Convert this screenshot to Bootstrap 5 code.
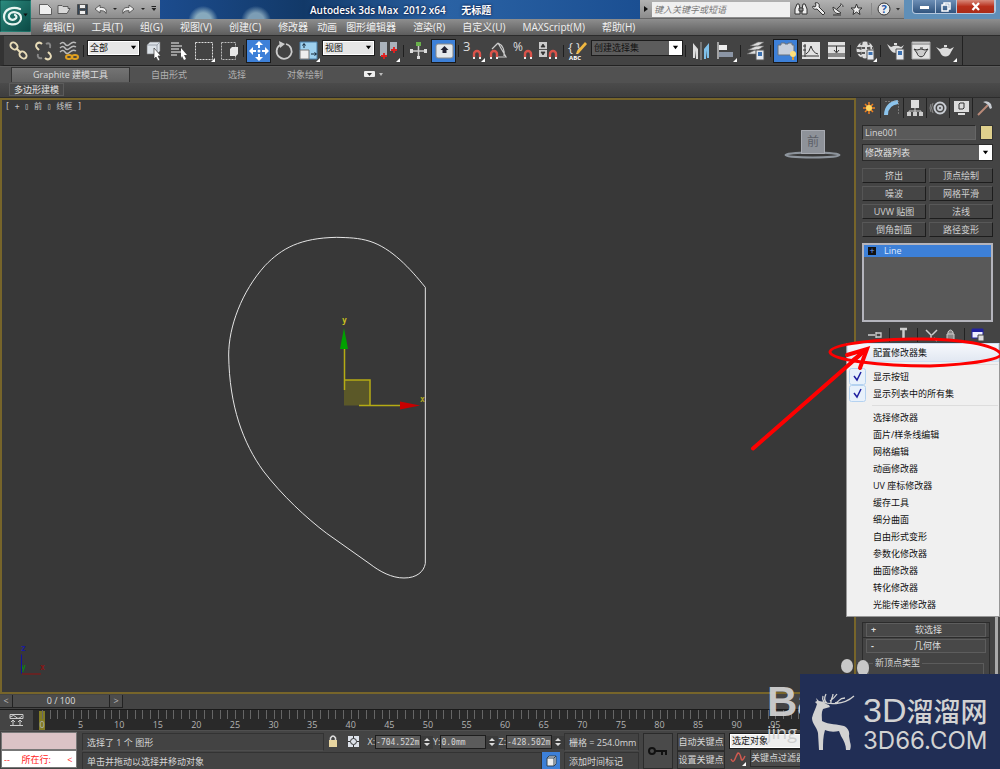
<!DOCTYPE html>
<html lang="zh-CN">
<head>
<meta charset="utf-8">
<meta name="viewport" content="width=device-width, initial-scale=1">
<title>Autodesk 3ds Max 2012 x64 无标题</title>
<link rel="stylesheet" href="https://cdn.jsdelivr.net/npm/bootstrap@5.3.0/dist/css/bootstrap.min.css">
<style>
:root{--face:#444;--ink:#d6d6d6;--olive:#77652a;--blue:#3d80d8}
body{font:9px/12px "Open Sans","Noto Sans CJK SC",sans-serif;color:var(--ink);background:var(--face);overflow:hidden}
svg{display:block;flex:none}
.btn{--bs-btn-padding-x:0;--bs-btn-padding-y:0;--bs-btn-border-radius:0;--bs-btn-border-width:0;font:inherit;color:inherit;line-height:12px}
.form-control,.form-select{font:inherit;color:inherit;border-radius:0;min-height:0;padding:0 2px;line-height:12px;border:1px solid #222}
.form-select{background:#e6e6e6 url("data:image/svg+xml,%3Csvg xmlns='http://www.w3.org/2000/svg' viewBox='0 0 8 8'%3E%3Cpath d='M1 2h6L4 6z'/%3E%3C/svg%3E") no-repeat right 2px center/7px;color:#111;border:1px solid #1c1c1c;box-shadow:inset 0 0 0 1px #fff}
.form-select.dark{color:#e0e0e0;background:url("data:image/svg+xml,%3Csvg xmlns='http://www.w3.org/2000/svg' viewBox='0 0 8 8'%3E%3Cpath d='M1 2h6L4 6z'/%3E%3C/svg%3E") no-repeat right 3px center/7px,linear-gradient(#fff,#fff) no-repeat right/13px 100%,#5c5c5c;box-shadow:none}
/* header */
.logo-btn{width:31px;height:32px;background:linear-gradient(135deg,#2b8a7e,#0b4a45);border:1px solid #123;display:grid;place-items:center}
.titlerow{height:19px;background:#1d4a8a}
.greybar{background:linear-gradient(#b2b2b2,#8c8c8c);border-bottom:1px solid #666}
.caption{background:radial-gradient(circle at 9% 110%,#87a9bd 0 8px,transparent 15px),radial-gradient(circle at 20% 110%,#7c9db5 0 8px,transparent 15px),radial-gradient(ellipse at 59% 110%,#a9c4da 0 8px,transparent 22px),radial-gradient(ellipse at 84% 120%,#6b93bd 0 4px,transparent 20px),linear-gradient(90deg,#1c4c8e,#123968 30%,#2a62a4 60%,#1b4f92);color:#fff;font-weight:600;font-size:10px;text-shadow:0 0 3px #002;overflow:hidden}
.caption-text{padding-left:150px}
.search-box{width:138px;height:15px;background:#f0f0f0;color:#666;font-style:italic;border:0}
.search-box::placeholder{color:#777;opacity:1}
.menurow{height:16px;background:linear-gradient(#8e8e8e,#5d5d5d);padding-left:12px;gap:17px;font-size:10px}
.menurow a{color:#f0f0f0;text-decoration:none}
.tight{gap:9px}
.win{height:14px;border:1px solid #b4c7dd;border-top:0;background:linear-gradient(#6d8fb6,#31547e);overflow:hidden;border-radius:0 0 4px 4px}
.win .btn{height:13px;display:grid;place-items:center;border-right:1px solid #b4c7dd}
.win .w1{width:23px}.win .w2{width:21px}.win .w3{width:38px;background:linear-gradient(#d88a7b,#b8301c 50%,#a92c18)}
.win-wrap{background:#5f8fb8}
/* toolbar */
.tools{height:31px;background:#434343;border-top:1px solid #2c2c2c;border-bottom:1px solid #222;border-left:4px solid #333;padding-left:2px}
.toolset{border-right:1px solid #222}
.tools svg{overflow:visible}
.tools .btn{width:25px;height:24px;display:grid;place-items:center}
.tools .btn.active{background:var(--blue);box-shadow:inset 0 0 0 1px #1a1a1a;color:#fff}
.vsep{width:5px;height:12px;background:linear-gradient(#1f1f1f,#1f1f1f) center/1px 100% no-repeat}
.combo-s{width:53px;height:16px;margin:0 1px 6px}
.combo-l{width:92px;height:16px;margin-bottom:6px}
.tools .combo-l{color:#111}
/* ribbon */
.ribbon-tabs{height:17px;background:#515151;border-top:1px solid #5c5c5c;padding-left:11px}
.ribbon-tabs .btn{height:15px;color:#b0b0b0}
.ribbon-tabs .btn.active{width:119px;margin-right:21px;background:linear-gradient(#747474,#626262);color:#ddd;border:1px solid #333;border-bottom:0}
.ribbon-rest{gap:41px}
.ribbon-panel{height:15px;background:linear-gradient(#4b4b4b,#3e3e3e);border-bottom:1px solid #2c2c2c;padding-left:9px}
.ribbon-panel .btn{background:#484848;border:1px solid #5b5b5b;padding:0 4px;height:13px;line-height:11px;color:#e4e4e4}
/* work area */
.viewport-pane{background:#383838;border:2px solid var(--olive)}
.viewport-pane svg{position:absolute;inset:0;width:100%;height:100%}
.vp-label{padding:1px 3px;color:#c8c8c8;font-family:"DejaVu Sans Mono","Noto Sans CJK SC",monospace;font-size:8px;white-space:pre}
.cmd{width:144px;background:var(--face);padding:0 7px 0 6px}
.cmd-tabs{height:21px;margin:0 -6px 6px -4px}
.cmd-tabs .btn{width:23px;height:20px;display:grid;place-items:center;border-right:1px solid #222}
.name-in{height:15px;background:#5a5a5a;border:1px solid #2a2a2a;border-right-color:#666;border-bottom-color:#666}
.swatch{width:13px;height:15px;background:#dfd08d;border:1px solid #333}
.mod-list{height:17px;border-color:#2a2a2a}
.modset{display:grid;grid-template-columns:1fr 1fr;gap:3px;margin:7px 0 6px}
.modset .btn{height:15px;background:#454545;border-top:1px solid #585858;border-left:1px solid #555;border-right:1px solid #1d1d1d;border-bottom:1px solid #1d1d1d;color:#cfcfcf}
.stack{height:79px;background:#595959;border:2px solid #b4b4bc}
.stack-row{height:12px;background:var(--blue);color:#dfe9ff}
.pl{width:8px;height:8px;background:#111;color:#6fa2ff;line-height:7px;text-align:center}
.rollout{height:14px;border:1px solid #5d5d5d;background:#484848;line-height:12px;color:#ddd}
.rollwrap{border:1px solid #2c2c2c;padding:1px 3px;margin-right:3px}
.group-box{border:1px solid #5c5c5c;border-bottom:0;height:29px;margin:8px 2px 0;padding:0}
.group-box legend{float:none;width:auto;font-size:9px;line-height:12px;margin:0 0 0 4px;padding:0 2px}
.scroll-strip{right:2px;top:519px;bottom:0;width:3px;background:#aaa}
/* popup list */
.popmenu{right:0;top:245px;width:154px;height:274px;background:#f0f0f0;border:1px solid #979797;padding:0 1px 2px;color:#111}
.popmenu .btn{text-align:left;padding-left:25px;position:relative;color:#111}
.popmenu .btn:first-child{background:linear-gradient(#f6f8fc,#e2e8f2);box-shadow:0 0 0 1px #cfe0f4}
.popmenu hr{margin:3px 0 3px 24px;opacity:1;border-top:1px solid #ddd}
.popmenu .tick svg{position:absolute;left:1px;top:0;width:17px;height:17px}
.markup{right:0;top:235px}
/* time controls */
.slider-row{height:15px;background:var(--face);padding-top:1px}
.slider-row .btn{height:13px;width:13px;background:#4c4c4c;border-right:1px solid #222;border-bottom:1px solid #222;line-height:12px;color:#bbb}
.slider-row .thumb{width:97px;color:#ddd}
.trackbar{height:21px;background:#292929;border-top:1px solid #1a1a1a}
.curve-toggle{width:33px;height:20px;background:#444;display:grid;place-items:center}
.ticks{margin:0 186px 0 9px}
.cell5{flex:1 1 0;min-width:0;position:relative}
.cell5 i{flex:1 1 0;height:9px;border-left:1px solid #666}
.cell5 b{position:absolute;left:-10px;top:9px;width:20px;text-align:center;font-weight:400;line-height:11px;color:#b4b4b4}
.now{left:-3px;top:1px;width:6px;height:19px;background:#918923;opacity:.85}
/* status */
.status{height:39px;background:var(--face);border-top:1px solid #505050}
.listener{width:78px;padding:1px}
.listener .form-control{height:18px;background:#dbc3c6;border-color:#777}
.listener .form-control+.form-control{background:#fff;color:#f22}
.prompts{padding:2px 4px 0 4px;gap:1px}
.cellbox{height:18px;border:1px solid #333;border-bottom-color:#4e4e4e;padding:2px 4px;background:#434343;line-height:13px;white-space:nowrap;overflow:hidden}
.cell-end{width:75px}
.coord{width:46px;height:14px;background:#5b5b5b;border-color:#1e1e1e;font-family:"DejaVu Sans Mono",monospace;font-size:8px;padding:0}
.spin{width:12px;height:13px;display:grid;place-items:center;background:#3b3b3b}
.degrade{background:var(--blue);width:18px}
.keys{width:357px;padding-top:2px}
.keys .btn{background:#4a4a4a;border:1px solid #2b2b2b;height:18px;white-space:nowrap}
.keys .bigkey{width:30px;height:36px;display:grid;place-items:center}
.keys .kb{width:48px}
.keys .form-select{height:16px;background-color:#eee}
/* watermarks */
.brand-card{right:0;bottom:0;width:200px;height:95px;background:#212e55;color:#d2d2d2;z-index:9}
.brand-words{position:absolute;left:63px;top:18px;white-space:nowrap}
.brand-top{height:37px;line-height:36px;font-size:27px;font-family:"Noto Sans CJK SC",sans-serif;font-weight:500}
.brand-top span{font:34px/36px "Liberation Sans",sans-serif}
.brand-sub{font:24px/24px Inter,sans-serif}
.wm{right:0;bottom:0;width:233px;height:112px;color:#cfcfcf;z-index:8}
.wm-a{font:bold 42px/42px "Liberation Sans",sans-serif;opacity:.95}
.wm-b{font:18px/18px "Open Sans",sans-serif}
.paws{left:74px;top:2px}
</style>
</head>
<body class="d-flex flex-column min-vh-100 position-relative">
<header class="d-flex greybar border-0">
  <button class="btn logo-btn" aria-label="应用程序菜单"><svg width="29" height="30" viewBox="0 0 29 30" fill="none" stroke="#e8f4f0" stroke-width="2.2" stroke-linecap="round"><path d="M19 8C12 5 3 8 3 16c0 9 15 10 17 2 1-7-10-9-12-4-1 4 3 6 6 4 2-1 2-3 0-4"/><path d="M22.500 12.500h4l-2 3z" fill="#111" stroke="none"/></svg></button>
  <div class="flex-grow-1">
    <div class="titlerow d-flex">
      <div class="greybar d-flex align-items-center px-1">
        <svg width="121" height="18" viewBox="35 0 121 18"><g fill="#eee" stroke="#444" stroke-width=".8"><path d="M39.500 4.500h8l4 4v6h-12z"/><path d="M58 13.500v-8h4l1 1h5v2h2l-3 5z" fill="#d8d8d8"/><path d="M77.500 4.500h10v10h-10z" fill="#345"/><path d="M79.500 4.500h6v4h-6zM79.500 10.500h6v4h-6z"/><path d="M95 9l5-4v2.500c5-.5 7 2 6 6-1-2.500-3-3-6-2.800V13z"/><path d="M134 9l-5-4v2.500c-5-.5-7 2-6 6 1-2.500 3-3 6-2.800V13z"/></g><path d="M113 8h4l-2 2zM141 8h4l-2 2zM151.500 6h5v1h-5zM151.500 8h5l-2.500 3z" fill="#222"/></svg>
      </div>
      <div class="caption flex-grow-1 d-flex align-items-center"><span class="caption-text text-nowrap">Autodesk 3ds Max&nbsp; 2012 x64 &nbsp; &nbsp; &nbsp;无标题</span></div>
      <div class="greybar d-flex align-items-center">
        <svg width="12" height="18" viewBox="0 0 12 18"><path d="M4 6v6l4-3z" fill="#111"/></svg>
        <input class="form-control search-box" aria-label="搜索" placeholder="键入关键字或短语">
        <svg width="114" height="18" viewBox="791 0 114 18"><g fill="#eee" stroke="#333" stroke-width="1"><path d="M796 14V9l2-5h2l1 5v5zM803 14V9l1-5h2l2 5v5zM800 8h4v3h-4z"/><path d="M816 3c3-1 5 1 4 4l6 6-2 2-6-6c-3 1-5-1-4-3l2 1 1-2z"/><path d="M834 7l8 6c-4 2-8-1-8-6zM838 9l4-4M841 4c2 0 3 1 3 3M834 15h8" /><path d="M857.500 4l1.500 4h4l-3 2.500 1 4-3.500-2.500-3.500 2.500 1-4-3-2.500h4z"/><circle cx="885" cy="9" r="6"/></g><path d="M872.500 3v12" stroke="#888"/><text x="885" y="13" font-size="11" font-weight="700" text-anchor="middle" fill="#2759a8">?</text><path d="M897 8h4l-2 2.500z" fill="#333"/></svg>
      </div>
      <div class="win-wrap px-1 ps-2">
        <div class="win d-flex">
          <button class="btn w1" aria-label="最小化"><svg width="11" height="9"><path d="M1 4h9v3H1z" fill="#fff"/></svg></button>
          <button class="btn w2" aria-label="还原"><svg width="10" height="10" fill="none" stroke="#fff" stroke-width="1.500"><path d="M3 3V1h6v6H7M1 3h6v6H1z"/></svg></button>
          <button class="btn w3" aria-label="关闭"><svg width="10" height="9" stroke="#fff" stroke-width="2.200"><path d="M1.500 1l6.500 7M8 1L1.500 8"/></svg></button>
        </div>
      </div>
    </div>
    <nav class="menurow d-flex align-items-center text-nowrap">
      <a href="#">编辑(E)</a><a href="#">工具(T)</a><a href="#">组(G)</a><a href="#">视图(V)</a><a href="#">创建(C)</a>
      <span class="d-flex tight"><a href="#">修改器</a><a href="#">动画</a><a href="#">图形编辑器</a></span>
      <a href="#">渲染(R)</a><a href="#">自定义(U)</a><a href="#">MAXScript(M)</a><a href="#">帮助(H)</a>
    </nav>
  </div>
</header>

<div class="tools d-flex">
 <div class="toolset d-flex align-items-center pe-1">
  <button class="btn" aria-label="链接"><svg width="22" height="22" fill="none" stroke="#e8dcb8" stroke-width="2"><ellipse cx="6" cy="6" rx="4" ry="3" transform="rotate(45 6 6)"/><ellipse cx="15" cy="15" rx="4" ry="3" transform="rotate(45 15 15)"/><path d="M8 8l5 5"/></svg></button>
  <button class="btn" aria-label="取消链接"><svg width="22" height="22" fill="none" stroke="#e8dcb8" stroke-width="2"><path d="M9 4C6 1 1 4 4 8l2 2M12 18c3 3 8 0 5-4l-2-2"/><path d="M13 4c3-2 5 0 4 4M5 14c-1 3 1 5 4 4" stroke="#888"/></svg></button>
  <button class="btn" aria-label="绑定"><svg width="22" height="22" fill="none" stroke="#bbb" stroke-width="1.500"><path d="M2 4q3-3 5 0t5 0 6-1M2 8q3-3 5 0t5 0 6-1M2 12q3-3 5 0t5 0 6-1"/><g stroke="#e0a020" stroke-width="2"><ellipse cx="11" cy="17" rx="3" ry="2"/><ellipse cx="17" cy="17" rx="3" ry="2"/></g></svg></button>
  <span class="vsep"></span>
  <select class="form-select combo-s" aria-label="选择过滤器"><option>全部</option></select>
  <button class="btn" aria-label="选择对象"><svg width="22" height="22"><path d="M4 5l3-3h10v9l-3 3H4z" fill="#dce2e8" stroke="#777" stroke-width=".6"/><path d="M4 5h10v9M14 5l3-3" fill="none" stroke="#8a939c" stroke-width=".8"/><path d="M11 8l7 8h-3l2 4-2 1-2-4-2 2z" fill="#fff" stroke="#333" stroke-width=".7"/></svg></button>
  <button class="btn" aria-label="按名称选择"><svg width="22" height="22"><path d="M3 3h8M3 6h11M3 9h8M3 12h10M3 15h6" stroke="#bbb" stroke-width="1.300"/><path d="M13 8l6 7h-3l2 4-2 1-2-4-1 2z" fill="#fff"/></svg></button>
  <button class="btn" aria-label="矩形选择区域"><svg width="22" height="22"><path d="M2.500 2.500h17v17h-17z" fill="none" stroke="#ddd" stroke-dasharray="2 1"/><path d="M22 18v4h-4z" fill="#fff"/></svg></button>
  <button class="btn" aria-label="窗口/交叉"><svg width="22" height="22"><path d="M3.500 2.500h14v17h-14z" fill="none" stroke="#bbb" stroke-dasharray="2 1"/><path d="M12 9l2-2h6v7l-2 2h-6z" fill="#e8e8e8"/></svg></button>
  <span class="vsep"></span>
  <button class="btn active" aria-label="选择并移动"><svg width="22" height="22" fill="#fff"><path d="M11 1l4 4h-3v3h-2V5H7zM11 21l4-4h-3v-3h-2v3H7zM1 11l4-4v3h3v2H5v3zM21 11l-4-4v3h-3v2h3v3z"/><circle cx="11" cy="11" r="1.500"/></svg></button>
  <button class="btn" aria-label="选择并旋转"><svg width="22" height="22" fill="none" stroke="#ccc" stroke-width="1.800"><path d="M7 5a7.500 7.500 0 1 0 6-1"/><path d="M6 1l6 3-5 4z" fill="#ccc" stroke="none"/></svg></button>
  <button class="btn" aria-label="选择并缩放"><svg width="22" height="22"><path d="M2 2h17v17H2z" fill="#9ed0ee" stroke="#4b7fa8"/><path d="M2 10h9v9H2z" fill="#eee" stroke="#777"/><path d="M6 8V4M4.500 5.500L6 3.500l1.500 2M13 14h5M16.500 12.500l2 1.500-2 1.500" stroke="#123" fill="none"/><path d="M22 18v4h-4z" fill="#fff"/></svg></button>
  <select class="form-select combo-s" aria-label="参考坐标系"><option>视图</option></select>
  <button class="btn" aria-label="使用轴点中心"><svg width="22" height="22"><path d="M2 2h7v14H2zM12 2h7v9h-7z" fill="#aab2bb"/><path d="M6 13v6M3 16h6M16 7v6M13 10h6" stroke="#e02020" stroke-width="1.800"/><path d="M22 18v4h-4z" fill="#fff"/></svg></button>
  <span class="vsep"></span>
  <button class="btn" aria-label="选择并操纵"><svg width="22" height="22"><path d="M10.500 4v14M3 11h15" stroke="#ccc" stroke-width="1.500"/><path d="M8 2h5v4H8z" fill="#6ab04c"/><path d="M2 9h3v4H2zM16 9h3v4h-3zM9 16h3v3H9z" fill="#ddd"/></svg></button>
  <button class="btn active" aria-label="键盘快捷键覆盖切换"><svg width="22" height="22"><rect x="3" y="4" width="17" height="14" rx="2" fill="#e4e8ec" stroke="#888"/><path d="M11.500 6l4 4h-2v3h-4v-3h-2z" fill="#223"/></svg></button>
  <span class="vsep"></span>
  <button class="btn" aria-label="捕捉开关"><svg width="22" height="22"><text x="0" y="11" font-size="13" fill="#ddd">3</text><path d="M11 17v-3a3 3 0 0 1 6 0v3" fill="none" stroke="#d9534a" stroke-width="2.400"/><path d="M10 17h2v2h-2zM16 17h2v2h-2z" fill="#eee"/><path d="M22 18v4h-4z" fill="#fff"/></svg></button>
  <button class="btn" aria-label="角度捕捉"><svg width="22" height="22"><path d="M4 9l6-6M10 3l8 14H9M10 3c5 2 7 8 6 13" fill="none" stroke="#ccc" stroke-width="1.200"/><path d="M3 17v-3a3 3 0 0 1 6 0v3" fill="none" stroke="#d9534a" stroke-width="2.400"/><path d="M2 17h2v2H2zM8 17h2v2H8z" fill="#eee"/></svg></button>
  <button class="btn" aria-label="百分比捕捉"><svg width="22" height="22"><text x="0" y="11" font-size="12" fill="#ddd">%</text><path d="M12 17v-3a3 3 0 0 1 6 0v3" fill="none" stroke="#d9534a" stroke-width="2.400"/><path d="M11 17h2v2h-2zM17 17h2v2h-2z" fill="#eee"/></svg></button>
  <button class="btn" aria-label="微调器捕捉"><svg width="22" height="22"><path d="M1 2h8v15H1z" fill="#ccc"/><path d="M3 7l2-3 2 3zM3 12l2 3 2-3zM1 9.500h8" stroke="#333" stroke-width=".8" fill="#333"/><path d="M12 17v-3a3 3 0 0 1 6 0v3" fill="none" stroke="#d9534a" stroke-width="2.400"/><path d="M11 17h2v2h-2zM17 17h2v2h-2z" fill="#eee"/></svg></button>
  <span class="vsep"></span>
  <button class="btn" aria-label="编辑命名选择集"><svg width="22" height="22"><text x="0" y="12" font-size="13" fill="#ddd">{</text><text x="8" y="12" font-size="13" fill="#ddd">}</text><path d="M17 2l2 2-8 9-3 1 1-3z" fill="#f0b840"/><text x="1" y="20" font-size="6" font-weight="700" fill="#fff">ABC</text></svg></button>
  <select class="form-select dark combo-l" aria-label="命名选择集"><option>创建选择集</option></select>
  <span class="vsep"></span>
  <button class="btn" aria-label="镜像"><svg width="22" height="22"><path d="M3 3l5 6v10H6V10l-1 8H3z" fill="#ddd"/><path d="M19 3l-5 6v10h2V10l1 8h2z" fill="#7fc0ea"/><path d="M11 2v18" stroke="#aaa"/></svg></button>
  <button class="btn" aria-label="对齐"><svg width="22" height="22"><path d="M3 2v17" stroke="#ccc" stroke-width="1.400"/><path d="M4 5h8v5H4z" fill="#eee"/><path d="M4 12h14v5H4z" fill="#8b95a5"/><path d="M22 18v4h-4z" fill="#fff"/></svg></button>
  <span class="vsep"></span>
  <button class="btn" aria-label="层管理器"><svg width="22" height="22"><path d="M2 14l8-4h9l-6 4zM3 10l8-4h8l-6 4zM5 6l8-4h6l-6 4z" fill="#ddd" stroke="#666" stroke-width=".6"/><path d="M11 10h8v10h-8z" fill="#e4e8ee" stroke="#555"/><path d="M13 12h4v4h-4z" fill="#3a70b0"/></svg></button>
  <span class="vsep"></span>
  <button class="btn active" aria-label="石墨建模工具"><svg width="22" height="22"><path d="M3 5h3V3h4v1h3V3h4v2h2v10H3z" fill="#c8d0dc" stroke="#68727f"/><circle cx="18" cy="14" r="3" fill="#ffe07a"/><path d="M17 17h2v3h-2z" fill="#d9972e"/></svg></button>
  <button class="btn" aria-label="曲线编辑器"><svg width="22" height="22"><path d="M2 2h18v17H2z" fill="#e2e2e2"/><path d="M5 4v13M2 16h17M6 14q3-1 5-8 2 7 7 8M3 6h3M3 10h3" fill="none" stroke="#333"/></svg></button>
  <button class="btn" aria-label="图解视图"><svg width="22" height="22"><path d="M3 2h17v17H3z" fill="#e2e2e2"/><path d="M3 6h17M3 14h17M3 16h17M11.500 6v6M9 10l2.500 3 2.500-3" fill="none" stroke="#333"/></svg></button>
  <span class="vsep"></span>
  <button class="btn" aria-label="材质编辑器"><svg width="22" height="22"><circle cx="10" cy="10" r="8.500" fill="#dcdcdc"/><path d="M2 8h16M2 13h16M7 2q-3 8 0 16M13 2q3 8 0 16" stroke="#555" stroke-width="2" stroke-dasharray="3 2" fill="none"/><path d="M12 10h7v10h-7z" fill="#e4e8ee" stroke="#555"/><path d="M13.500 12h4v3h-4z" fill="#3a70b0"/><path d="M22 18v4h-4z" fill="#fff"/></svg></button>
  <span class="vsep"></span>
  <button class="btn" aria-label="渲染设置"><svg width="22" height="22"><path d="M2 4l4 3q5-3 10 0l3-2-3 5q-2 3-5 3c-4 0-6-3-9-9zM9 3h3v2H9z" fill="#ddd"/><path d="M11 9h8v11h-8z" fill="#e4e8ee" stroke="#555"/><path d="M13 11h4v4h-4z" fill="#3a70b0"/></svg></button>
  <button class="btn" aria-label="渲染帧窗口"><svg width="22" height="22"><path d="M2 2h18v17H2z" fill="#e2e2e2" stroke="#aaa"/><path d="M2 4h18" stroke="#777"/><path d="M4 9l3 1q4-2 8 0l3-1-3 4c-1 5-7 5-8 0zM10 8h3" fill="#ccc" stroke="#333"/></svg></button>
  <button class="btn" aria-label="渲染产品"><svg width="22" height="22"><path d="M1 7l4 2q5-3 10 0l4-2-3 5c-2 6-9 6-11 0zM9 5h3v2H9z" fill="#dcdcdc"/><path d="M22 18v4h-4z" fill="#fff"/></svg></button>
 </div>
</div>

<div class="ribbon-tabs d-flex align-items-start">
  <button class="btn active">Graphite 建模工具</button>
  <div class="ribbon-rest d-flex">
  <button class="btn">自由形式</button>
  <button class="btn">选择</button>
  <button class="btn">对象绘制</button>
  <svg width="36" height="15"><rect x="0" y="4" width="11" height="6" rx="1" fill="#eee"/><path d="M3 6h5L5.500 9z" fill="#333"/><path d="M15 6h4l-2 3z" fill="#bbb"/></svg>
  </div>
</div>
<div class="ribbon-panel"><button class="btn d-block">多边形建模</button></div>

<main class="d-flex flex-grow-1 position-relative">
  <section class="viewport-pane flex-grow-1 position-relative">
    <div class="vp-label">[ + ▯ 前 ▯ 线框 ]</div>
    <svg viewBox="2 100 852 592" preserveAspectRatio="xMinYMin meet">
      <g transform="translate(210 220) scale(.33333)" fill="none" stroke="#e6e6e6" stroke-width="3"><path d="M646 202C600 145 545 85 480 64 445 53 415 53 380 52 270 54 215 85 165 137 95 215 56 320 56 405 58 560 100 670 160 753 215 825 290 895 350 940L480 1032C510 1055 545 1074 582 1074 620 1074 642 1055 646 1030Z"/></g>
      <path d="M344 380h26v25.500h-26z" fill="#5b5828"/>
      <path d="M344.500 390V347M344 380h26v25.500M359 405.500h42" fill="none" stroke="#b5ab14" stroke-width="1.500"/>
      <path d="M344 328l4 21h-8z" fill="#00a000"/><path d="M420 405.500l-20-4v8z" fill="#c80000"/>
      <g font-family="DejaVu Sans Mono" font-size="8" font-weight="700"><text x="342" y="323" fill="#c9c020">y</text><text x="420" y="402" fill="#b0a820">x</text>
      <text x="21" y="651" fill="#1a1aa0">z</text><text x="21" y="670" fill="#108010">y</text><text x="40" y="670" fill="#8a1414">x</text></g>
      <path d="M21.500 654.500v19" stroke="#1212a0"/><path d="M22 674h19" stroke="#901010"/>
      <ellipse cx="812.500" cy="155" rx="27" ry="2.500" fill="none" stroke="#8d949c" stroke-width="2"/>
      <path d="M801 130h24v24h-24z" fill="#8e9299"/><path d="M801.500 130.500h23v23h-23z" fill="none" stroke="#a8abb2"/>
      <text x="813" y="146" font-size="12" text-anchor="middle" fill="#5c6068" font-family="Noto Sans CJK SC">前</text>
    </svg>
  </section>

  <aside class="cmd d-flex flex-column">
    <div class="cmd-tabs d-flex">
      <button class="btn" aria-label="创建"><svg width="20" height="18"><g stroke="#f08020" stroke-width="1.500"><path d="M10 3v12M4 9h12M6 5l8 8M14 5l-8 8"/></g><circle cx="10" cy="9" r="3" fill="#ffd860"/></svg></button>
      <button class="btn" aria-label="修改"><svg width="20" height="18"><path d="M4 16C4 9 8 4 16 3" fill="none" stroke="#8cc4ec" stroke-width="4"/><path d="M3.500 2.500h13v14" fill="none" stroke="#aaa" stroke-dasharray="1 2"/></svg></button>
      <button class="btn" aria-label="层次"><svg width="20" height="18"><path d="M6 1h8v8H6z" fill="#ddd"/><path d="M10 9v3M4 13v-1h12v1M10 12v1" stroke="#ccc" fill="none"/><path d="M2 13h4v4H2zM8 13h4v4H8zM14 13h4v4h-4z" fill="#ccc"/></svg></button>
      <button class="btn" aria-label="运动"><svg width="20" height="18" fill="none" stroke="#c8ccd2"><circle cx="12" cy="9" r="5.500" stroke-width="2"/><circle cx="12" cy="9" r="2" stroke-width="2"/><path d="M5 4q-3 5 0 10M3 5q-2 4 0 8" stroke="#888"/></svg></button>
      <button class="btn" aria-label="显示"><svg width="20" height="18"><path d="M3 2h15v11H3zM7 14h7v2H7z" fill="#ddd"/><path d="M8 5l1-1h4v5l-1 1H8z" fill="none" stroke="#333"/></svg></button>
      <button class="btn border-0" aria-label="工具"><svg width="20" height="18"><path d="M3 16L13 6" stroke="#b98a78" stroke-width="2"/><path d="M8 3q5-2 8 2l1 4-2 1-2-4q-2-2-5-3z" fill="#c8ccd2"/></svg></button>
    </div>
    <div class="d-flex gap-1">
      <input class="form-control name-in" aria-label="名称" value="Line001">
      <button class="btn swatch flex-shrink-0" aria-label="颜色"></button>
    </div>
    <select class="form-select dark mod-list mt-1" aria-label="修改器列表"><option>修改器列表</option></select>
    <div class="modset">
      <button class="btn">挤出</button><button class="btn">顶点绘制</button>
      <button class="btn">噪波</button><button class="btn">网格平滑</button>
      <button class="btn">UVW 贴图</button><button class="btn">法线</button>
      <button class="btn">倒角剖面</button><button class="btn">路径变形</button>
    </div>
    <div class="stack">
      <div class="stack-row d-flex align-items-center gap-2 px-1"><span class="pl">+</span><span>Line</span></div>
    </div>
    <svg class="mt-1" width="130" height="18" viewBox="862 325 130 18"><path d="M889.500 327v14M917.500 327v14M964.500 327v14" stroke="#222"/><path d="M868 334h7M876 331v6M876 332h5v4h-5" stroke="#ccc" fill="none" stroke-width="1.300"/><path d="M900 328h7M903.500 329v9" stroke="#ccc" stroke-width="2.500"/><path d="M926 329l5 5v5M937 329l-5 5M934 337l3 3" stroke="#ccc" fill="none" stroke-width="1.500"/><path d="M947 333v6h7v-6zM948 333v-2q2.500-4 5 0v2" stroke="#ccc" fill="#888"/><path d="M972 328h11v9h-11z" fill="#f0f0ff" stroke="#2222a0"/><path d="M972 328h11v3h-11z" fill="#2222a0"/><path d="M978 334h6v6h-6z" fill="#ddd" stroke="#444"/></svg>

    <div class="mt-auto">
      <div class="rollwrap border-bottom-0 py-0"><div class="rollout d-flex px-1"><b>+</b><span class="flex-grow-1 text-center">软选择</span></div></div>
      <div class="rollwrap border-bottom-0 pb-0"><div class="rollout d-flex px-1"><b>-</b><span class="flex-grow-1 text-center">几何体</span></div>
      <fieldset class="group-box mt-1 mb-2"><legend>新顶点类型</legend></fieldset></div>
    </div>
    <div class="scroll-strip position-absolute"></div>
  </aside>

  <div class="popmenu position-absolute d-flex flex-column" role="menu">
    <button class="btn flex-fill" role="menuitem">配置修改器集</button>
    <hr>
    <button class="btn flex-fill tick" role="menuitem"><svg viewBox="0 0 17 17"><rect x=".5" y=".5" width="16" height="16" rx="2" fill="#e8f1fb" stroke="#b5d2f0"/><path d="M5 8l3 4 4-8" fill="none" stroke="#2020a0" stroke-width="1.500"/></svg>显示按钮</button>
    <button class="btn flex-fill tick" role="menuitem"><svg viewBox="0 0 17 17"><rect x=".5" y=".5" width="16" height="16" rx="2" fill="#e8f1fb" stroke="#b5d2f0"/><path d="M5 8l3 4 4-8" fill="none" stroke="#2020a0" stroke-width="1.500"/></svg>显示列表中的所有集</button>
    <hr>
    <button class="btn flex-fill" role="menuitem">选择修改器</button>
    <button class="btn flex-fill" role="menuitem">面片/样条线编辑</button>
    <button class="btn flex-fill" role="menuitem">网格编辑</button>
    <button class="btn flex-fill" role="menuitem">动画修改器</button>
    <button class="btn flex-fill" role="menuitem">UV 座标修改器</button>
    <button class="btn flex-fill" role="menuitem">缓存工具</button>
    <button class="btn flex-fill" role="menuitem">细分曲面</button>
    <button class="btn flex-fill" role="menuitem">自由形式变形</button>
    <button class="btn flex-fill" role="menuitem">参数化修改器</button>
    <button class="btn flex-fill" role="menuitem">曲面修改器</button>
    <button class="btn flex-fill" role="menuitem">转化修改器</button>
    <button class="btn flex-fill" role="menuitem">光能传递修改器</button>
  </div>
  <svg class="markup position-absolute pe-none" width="250" height="120" viewBox="750 333 250 120" fill="none" stroke="#fe0000" stroke-linecap="round"><path d="M1001 354C995 345 960 338 912 339 860 340 830 346 830 352 831 360 880 366 930 366 975 364 1001 359 1001 354" stroke-width="3"/><path d="M753 448.500L860 355" stroke-width="4"/><path d="M847 355L867 349 860 368M867 349L852 361" stroke-width="4"/></svg>
</main>

<div class="slider-row d-flex">
  <button class="btn">&lt;</button><button class="btn thumb">0 / 100</button><button class="btn">&gt;</button>
</div>
<div class="trackbar d-flex">
  <button class="btn curve-toggle" aria-label="打开迷你曲线编辑器"><svg width="16" height="14" fill="none" stroke="#ccc"><path d="M1 1.500h13v4H1zM1 4q4-3 6 0t6-1M4 8v4M11 8v4M1 12.500h13M2 9l2-2 2 2M9 9l2-2 2 2"/></svg></button>
  <div class="ticks flex-grow-1 d-flex position-relative" id="ticks"><span class="now position-absolute"></span></div>
</div>

<footer class="status d-flex">
  <div class="listener"><input class="form-control" aria-label="宏录制器"><input class="form-control" aria-label="侦听器" value="--     所在行:       &lt;"></div>
  <div class="prompts flex-grow-1 d-flex flex-column">
    <div class="d-flex align-items-center">
      <div class="cellbox flex-grow-1">选择了 1 个 图形</div>
      <svg width="44" height="16" viewBox="326 733 44 16"><path d="M331 739h8v7h-8z" fill="#e8d5a0"/><path d="M332.500 739v-2q2.500-4 5 0v2" fill="none" stroke="#ddd" stroke-width="1.500"/><path d="M350 735h11v11h-11z" fill="#dde2ea"/><circle cx="355.500" cy="740.500" r="3" fill="none" stroke="#333"/><path d="M355.500 735v2.500M355.500 744v2M350 740.500h2M359 740.500h2" stroke="#333"/></svg>
      <label for="cx">X:</label><input id="cx" class="form-control coord" value="-704.522m"><span class="spin"><svg width="6" height="10" fill="#ddd"><path d="M0 4l3-3 3 3zM0 6l3 3 3-3z"/></svg></span>
      <label for="cy">Y:</label><input id="cy" class="form-control coord" value="0.0mm"><span class="spin"><svg width="6" height="10" fill="#ddd"><path d="M0 4l3-3 3 3zM0 6l3 3 3-3z"/></svg></span>
      <label for="cz">Z:</label><input id="cz" class="form-control coord" value="-428.502m"><span class="spin"><svg width="6" height="10" fill="#ddd"><path d="M0 4l3-3 3 3zM0 6l3 3 3-3z"/></svg></span>
      <div class="cellbox cell-end">栅格 = 254.0mm</div>
    </div>
    <div class="d-flex">
      <div class="cellbox flex-grow-1">单击并拖动以选择并移动对象</div>
      <button class="btn degrade me-1" aria-label="自适应降级"><svg width="18" height="16"><path d="M5 5l2-2h7v8l-2 2H5z" fill="#eee" stroke="#345"/><path d="M5 5h7v8M12 5l2-2" fill="none" stroke="#345"/></svg></button>
      <div class="cellbox cell-end">添加时间标记</div>
    </div>
  </div>
  <div class="keys d-flex gap-1 flex-shrink-0">
    <button class="btn bigkey" aria-label="设置关键点"><svg width="20" height="12" fill="none" stroke="#111" stroke-width="2"><circle cx="4" cy="6" r="3"/><path d="M7 6h12M14 6v4M18 6v4"/></svg></button>
    <div class="d-flex flex-column"><button class="btn kb">自动关键点</button><button class="btn kb">设置关键点</button></div>
    <div class="flex-grow-1"><select class="form-select" aria-label="选择集"><option>选定对象</option></select>
      <div class="d-flex gap-1"><svg width="17" height="18" fill="none"><path d="M2 10q2 5 4 0t3-6q2 0 3 5t4-2" stroke="#d05a50" stroke-width="1.500"/><path d="M17 13v4h-4z" fill="#fff"/></svg><button class="btn">关键点过滤器...</button></div></div>
  </div>
</footer>

<div class="wm position-absolute pe-none" aria-hidden="true">
  <svg class="paws position-absolute" width="60" height="20" viewBox="0 0 60 20"><g fill="#c8c8c8"><ellipse cx="6" cy="7" rx="6" ry="7"/><ellipse cx="22" cy="9" rx="6" ry="8"/></g></svg>
  <div class="wm-a pt-4">Ba</div><div class="wm-b">jing</div>
</div>
<div class="brand-card position-absolute">
  <svg class="position-absolute" width="60" height="95" viewBox="0 0 60 95"><path d="M16 24l3 3c4 0 6 3 10 4l1 2-7 2c-2 4-1 8-1 12 7 4 16 3 22 5 4 2 6 6 5 10l1 6c1 3 1 5 0 8h-4c0-5-2-9-5-14l-2-5c-5 1-9 1-14-1-2 6-2 13-2 20h-4l-1-17c-1-6-6-9-6-15 1-5 4-10 5-14l-2-2 2-1z" fill="#d2d2d2"/><path d="M22 28C28 30 43 32 54 22M27 29c-3-2-3-5-1-9M31 29c-1-3 2-5 2-9M24 28c-1-2-2-3-1-6M35 29c5-1 3-5 10-5M30 27c3-2 5-4 7-7" fill="none" stroke="#d2d2d2" stroke-width="1.300"/></svg>
  <div class="brand-words"><div class="brand-top"><span>3D</span>溜溜网</div><div class="brand-sub">3D66.COM</div></div>
</div>

<script src="https://cdn.jsdelivr.net/npm/bootstrap@5.3.0/dist/js/bootstrap.bundle.min.js"></script>
<script>
// Timeline: one cell per five frames, each holding five tick marks.
const ticks = document.getElementById('ticks');
for (let frame = 0; frame < 100; frame += 5) {
  ticks.insertAdjacentHTML('beforeend', `<div class="cell5 d-flex"><i></i><i></i><i></i><i></i><i></i><b>${frame}</b></div>`);
}
</script>
</body>
</html>
